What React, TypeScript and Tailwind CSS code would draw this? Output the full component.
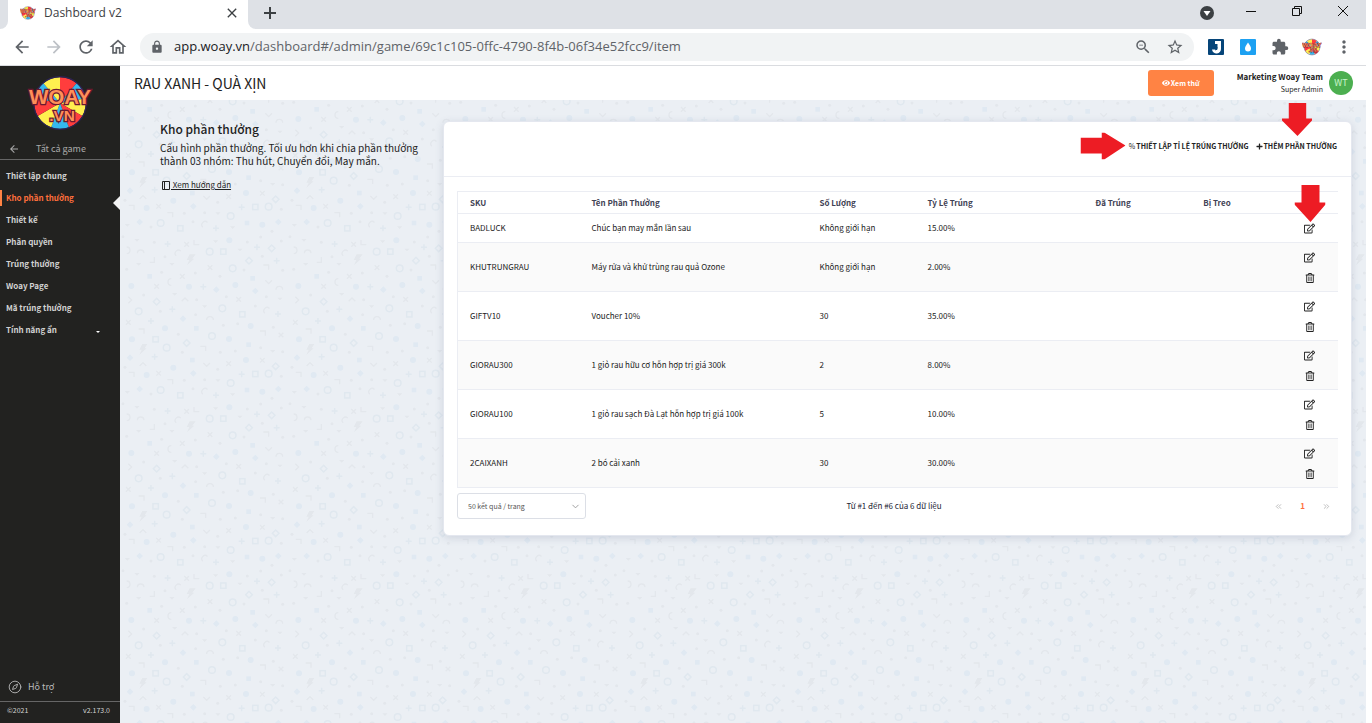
import { useState } from "react";
import { clsx } from "clsx";
import { ChevronDown, ChevronsLeft, ChevronsRight, Compass } from "lucide-react";
import { FaEye, FaPlus, FaRegEdit, FaRegTrashAlt } from "react-icons/fa";
import {
  MdArrowBack,
  MdArrowForward,
  MdClose,
  MdExtension,
  MdLock,
  MdMoreVert,
  MdOutlineHome,
  MdRefresh,
  MdStarBorder,
  MdZoomOut
} from "react-icons/md";

interface Reward {
  sku: string;
  name: string;
  quantity: string;
  rate: string;
  removable: boolean;
}

const REWARDS: Reward[] = [
  { sku: "BADLUCK", name: "Chúc bạn may mắn lần sau", quantity: "Không giới hạn", rate: "15.00%", removable: false },
  { sku: "KHUTRUNGRAU", name: "Máy rửa và khử trùng rau quả Ozone", quantity: "Không giới hạn", rate: "2.00%", removable: true },
  { sku: "GIFTV10", name: "Voucher 10%", quantity: "30", rate: "35.00%", removable: true },
  { sku: "GIORAU300", name: "1 giỏ rau hữu cơ hỗn hợp trị giá 300k", quantity: "2", rate: "8.00%", removable: true },
  { sku: "GIORAU100", name: "1 giỏ rau sạch Đà Lạt hỗn hợp trị giá 100k", quantity: "5", rate: "10.00%", removable: true },
  { sku: "2CAIXANH", name: "2 bó cải xanh", quantity: "30", rate: "30.00%", removable: true }
];

const MENU = [
  "Thiết lập chung",
  "Kho phần thưởng",
  "Thiết kế",
  "Phân quyền",
  "Trúng thưởng",
  "Woay Page",
  "Mã trúng thưởng",
  "Tính năng ẩn"
];

const WHEEL_COLORS = ["#ff3d3d", "#35b8ee", "#fff04f"];

const wedge = (index: number) => {
  const point = (angle: number) => {
    const rad = ((angle - 90) * Math.PI) / 180;
    return `${32 + 25 * Math.cos(rad)} ${27 + 25 * Math.sin(rad)}`;
  };
  return `M32 27L${point(index * 40)}A25 25 0 0 1 ${point(index * 40 + 40)}Z`;
};

function WoayLogo({ className }: { className?: string }) {
  return (
    <svg viewBox="0 0 64 54" className={className} role="img" aria-label="Woay.vn">
      {Array.from({ length: 9 }, (_, i) => (
        <path key={i} d={wedge(i)} fill={WHEEL_COLORS[i % 3]} />
      ))}
      <circle cx="32" cy="27" r="25.5" fill="none" stroke="#2b2354" strokeWidth="1.2" />
      <g
        fill="#ff8f58"
        stroke="#6b1830"
        strokeWidth="2.4"
        paintOrder="stroke"
        textAnchor="middle"
        className="font-['Liberation_Sans',sans-serif] font-bold"
      >
        <text x="32" y="28" fontSize="20">WOAY</text>
        <text x="34" y="44" fontSize="15">.VN</text>
      </g>
    </svg>
  );
}

type Points = [number, number][];

const DISCS: Points = [[187, 41], [88, 88], [106, 222], [295, 225], [468, 227], [152, 345], [87, 384], [297, 385], [396, 352], [138, 447], [421, 470], [341, 492]];
const RINGS: Points = [[92, 15], [206, 488], [383, 36], [29, 122], [98, 172], [67, 292], [317, 301], [36, 375], [401, 410]];
const BLOCKS: Points = [[141, 36], [158, 202], [350, 196], [146, 401], [490, 352], [478, 447]];
const FRAMES: Points = [[442, 52], [70, 122], [127, 310], [368, 385], [166, 489]];
const GEMS: Points = [[235, 33], [320, 33], [49, 236], [166, 240], [450, 323], [291, 440], [481, 487]];
const GEM_FRAMES: Points = [[215, 112], [147, 149], [371, 272], [461, 396], [227, 466]];
const PLUSES: Points = [[48, 52], [171, 109], [404, 99], [230, 149], [10, 227], [234, 309], [354, 330], [418, 295], [365, 437], [125, 490]];
const CROSSES: Points = [[461, 100], [30, 170], [371, 226], [448, 196], [116, 265], [286, 334], [243, 372], [187, 448], [86, 458], [377, 487]];
const TICKS: Points = [[54, 8], [98, 50], [283, 43], [47, 92], [312, 88], [120, 117], [317, 160], [417, 160], [240, 264], [425, 250], [14, 287], [218, 421]];
const DOTS: Points = [
  [14, 5], [216, 61], [182, 78], [244, 90], [270, 77], [142, 93], [354, 48], [454, 7], [480, 32], [364, 94],
  [187, 136], [396, 137], [132, 177], [248, 178], [281, 175], [386, 184], [487, 186], [60, 196], [79, 257],
  [199, 257], [332, 252], [491, 266], [166, 285], [382, 301], [488, 311], [113, 338], [70, 343], [220, 349],
  [436, 370], [182, 410], [61, 424], [106, 420], [248, 422], [448, 424], [276, 469], [53, 475], [244, 496]
];
// x, y, rotation
const ARCS: [number, number, number][] = [[12, 38, -45], [286, 118, 90], [323, 122, 0], [433, 124, -45], [410, 213, -90], [238, 231, 0], [198, 296, -45], [30, 322, 0]];
const CORNERS: [number, number, number][] = [[412, 11, 0], [199, 168, 0], [490, 95, 180], [358, 147, 90], [189, 366, 0], [326, 360, 0], [10, 412, 0], [296, 490, 0]];
const CHEVRONS: [number, number, number][] = [[206, 213, 180], [291, 267, 90], [456, 266, 0], [20, 461, 180], [330, 460, 0]];

function Backdrop() {
  return (
    <svg className="absolute inset-0 h-full w-full" aria-hidden="true">
      <defs>
        <pattern id="confetti" x="80" y="111" width="167" height="167" patternUnits="userSpaceOnUse">
          <g transform="scale(0.3333)" fill="#e0e9f2" stroke="none">
            {DISCS.map(([x, y]) => <circle key={`${x}-${y}`} cx={x} cy={y} r="9" />)}
            {BLOCKS.map(([x, y]) => <rect key={`${x}-${y}`} x={x - 7} y={y - 7} width="14" height="14" />)}
            {GEMS.map(([x, y]) => <path key={`${x}-${y}`} d={`M${x} ${y - 10}l10 10l-10 10l-10 -10z`} />)}
            <g fill="none" stroke="#e0e8ef" strokeWidth="4.5">
              {RINGS.map(([x, y]) => <circle key={`${x}-${y}`} cx={x} cy={y} r="10" />)}
              {FRAMES.map(([x, y]) => <rect key={`${x}-${y}`} x={x - 8} y={y - 8} width="16" height="16" />)}
              {GEM_FRAMES.map(([x, y]) => <path key={`${x}-${y}`} d={`M${x} ${y - 10}l10 10l-10 10l-10 -10z`} />)}
              {PLUSES.map(([x, y]) => <path key={`${x}-${y}`} d={`M${x - 9} ${y}h18M${x} ${y - 9}v18`} />)}
            </g>
            <g fill="none" stroke="#e3e7ec" strokeWidth="4">
              {CROSSES.map(([x, y]) => <path key={`${x}-${y}`} d={`M${x - 7} ${y - 7}l14 14M${x + 7} ${y - 7}l-14 14`} />)}
              {ARCS.map(([x, y, r]) => <path key={`${x}-${y}`} d="M-10 5A10 10 0 0 1 10 5" transform={`translate(${x} ${y}) rotate(${r})`} />)}
              {CORNERS.map(([x, y, r]) => <path key={`${x}-${y}`} d="M-9 -6H7V8" transform={`translate(${x} ${y}) rotate(${r})`} />)}
              {CHEVRONS.map(([x, y, r]) => <path key={`${x}-${y}`} d="M-10 5L0 -5L10 5" transform={`translate(${x} ${y}) rotate(${r})`} />)}
            </g>
            <g fill="#e3e7ec">
              {DOTS.map(([x, y]) => <circle key={`${x}-${y}`} cx={x} cy={y} r="4.5" />)}
              {TICKS.map(([x, y]) => <path key={`${x}-${y}`} d={`M${x - 8} ${y - 4}h16l-8 8z`} />)}
              <path d="M470 130h18l-10 13h6l-22 20l7 -16h-8z" />
              <path d="M328 399h15l-8 13h6l-22 20l7 -16h-7z" />
            </g>
          </g>
        </pattern>
      </defs>
      <rect width="100%" height="100%" fill="url(#confetti)" />
    </svg>
  );
}

function RedArrow({ className }: { className?: string }) {
  return (
    <svg viewBox="0 0 31 36" preserveAspectRatio="none" className={className} fill="#ed1c24" aria-hidden="true">
      <path d="M7 0h18v17h6v2L16 36L0 19v-2h7z" />
    </svg>
  );
}

function BrowserChrome() {
  return (
    <header className="border-b border-[#dadce0] font-['Open_Sans',sans-serif] text-[#5f6368]">
      <div className="flex h-[29px]">
        <div className="w-2 rounded-br-lg bg-[#dee1e6]" />
        <div className="flex w-60 items-center pb-1 pl-3 pr-2">
          <WoayLogo className="h-4 w-4" />
          <span className="ml-2 flex-1 text-xs text-[#3c4043]">Dashboard v2</span>
          <button type="button" aria-label="Close tab">
            <MdClose className="h-4 w-4 text-[#3c4043]" />
          </button>
        </div>
        <div className="flex flex-1 items-center rounded-bl-lg bg-[#dee1e6] pb-1 pl-3 text-[#202124]">
          <button type="button" aria-label="New tab">
            <svg viewBox="0 0 20 20" className="h-5 w-5" stroke="#3c4043" strokeWidth="2">
              <path d="M4 10h12M10 4v12" />
            </svg>
          </button>
          <span className="ml-auto" />
          <button type="button" aria-label="Search tabs" className="mr-8">
            <svg viewBox="0 0 14 14" className="h-[14px] w-[14px]">
              <circle cx="7" cy="7" r="7" fill="#3c4043" />
              <path d="M3.5 5h7L7 10z" fill="#fff" />
            </svg>
          </button>
          <div className="mb-1 flex gap-9 pr-[18px]">
            <button type="button" aria-label="Minimize">
              <svg viewBox="0 0 10 10" className="h-[10px] w-[10px]" stroke="#111" fill="none">
                <path d="M0 5.500h10" />
              </svg>
            </button>
            <button type="button" aria-label="Restore">
              <svg viewBox="0 0 10 10" className="h-[10px] w-[10px]" stroke="#111" fill="none">
                <path d="M.5 2.500h7v7h-7zM2.500 2.500v-2h7v7h-2" />
              </svg>
            </button>
            <button type="button" aria-label="Close">
              <svg viewBox="0 0 10 10" className="h-[10px] w-[10px]" stroke="#111" fill="none">
                <path d="M0 0l10 10M10 0L0 10" />
              </svg>
            </button>
          </div>
        </div>
      </div>
      <div className="flex h-9 items-center gap-3 px-3">
        <button type="button" aria-label="Back"><MdArrowBack className="h-5 w-5" /></button>
        <button type="button" aria-label="Forward"><MdArrowForward className="h-5 w-5 text-[#bdc1c6]" /></button>
        <button type="button" aria-label="Reload"><MdRefresh className="h-5 w-5" /></button>
        <button type="button" aria-label="Home"><MdOutlineHome className="h-5 w-5" /></button>
        <div className="flex h-7 flex-1 items-center gap-[10px] rounded-full bg-[#f1f3f4] px-[10px]">
          <MdLock className="h-[14px] w-[14px]" />
          <p className="flex-1 text-[13px] text-[#5f6368]">
            <span className="text-[#202124]">app.woay.vn</span>/dashboard#/admin/game/69c1c105-0ffc-4790-8f4b-06f34e52fcc9/item
          </p>
          <button type="button" aria-label="Zoom"><MdZoomOut className="h-[18px] w-[18px]" /></button>
          <button type="button" aria-label="Bookmark" className="ml-1"><MdStarBorder className="h-[18px] w-[18px]" /></button>
        </div>
        <div className="flex items-center gap-3">
          <svg viewBox="-2 0 20 16" className="h-4 w-5">
            <rect width="16" height="16" rx="1" fill="#064579" />
            <path d="M7 2h6v7.500a4.500 4.500 0 0 1-9 1h3.200c.8 1 2.300.6 2.300-1V5H7z" fill="#fff" />
            <path d="M8.800 6L6 9h2l-1 3l3-3.500H8.500z" fill="#064579" />
          </svg>
          <svg viewBox="-2 0 20 16" className="h-4 w-5">
            <rect width="16" height="16" rx="1" fill="#1da1f2" />
            <path d="M8 3.500c2 3 3 4.300 3 6a3 3 0 0 1-6 0c0-1.700 1-3 3-6z" fill="#fff" />
          </svg>
          <MdExtension className="h-[18px] w-5" />
          <WoayLogo className="h-5 w-5" />
          <button type="button" aria-label="Menu"><MdMoreVert className="h-5 w-5" /></button>
        </div>
      </div>
    </header>
  );
}

function Sidebar() {
  return (
    <aside className="relative flex w-[120px] shrink-0 flex-col bg-[#222220] text-[#d2d2d2]">
      <WoayLogo className="mx-auto mt-[9px] h-[56px] w-[66px]" />
      <a href="#games" className="mt-2 flex h-[21px] items-center gap-4 border-b border-[#666] pl-2 text-[9px] text-[#aaa]">
        <MdArrowBack className="h-3 w-3" />
        Tất cả game
      </a>
      <nav className="mt-[5px] flex flex-col text-[8px] font-bold">
        {MENU.map((item, index) => (
          <a key={item} href={`#menu-${index}`} className={clsx("flex h-[22px] items-center", index === 1 && "text-[#ff6f3c]")}>
            <span className={clsx("mr-1 h-4 w-[2px]", index === 1 && "bg-[#ff8344]")} />
            {item}
            {index === MENU.length - 1 ? (
              <span className="ml-auto mr-5 mt-1 border-x-2 border-t-2 border-x-transparent border-t-white" />
            ) : null}
          </a>
        ))}
      </nav>
      <span className="absolute right-0 top-[130px] border-y-[7px] border-r-[7px] border-y-transparent border-r-[#f4f4f4]" />
      <a href="#support" className="mt-auto flex items-center gap-[6px] border-b border-[#666] px-2 pb-[7px] text-[9px] text-[#bbb]">
        <Compass className="h-[14px] w-[14px]" strokeWidth={1.5} />
        Hỗ trợ
      </a>
      <div className="flex h-[21px] items-center justify-between pb-1 pl-[7px] pr-[10px] text-[7px]">
        <span>©2021</span>
        <span>v2.173.0</span>
      </div>
    </aside>
  );
}

function RewardTable() {
  return (
    <table className="w-full table-fixed border-collapse border-l border-t border-[#ebedf3] text-left text-[8px] leading-3 text-[#222]">
      <thead>
        <tr className="h-[22px] text-[#3f4254]">
          <th className="w-[122px] pl-3 font-semibold">SKU</th>
          <th className="w-[228px] pl-3 font-semibold">Tên Phần Thưởng</th>
          <th className="w-[108px] pl-3 font-semibold">Số Lượng</th>
          <th className="pl-3 font-semibold">Tỷ Lệ Trúng</th>
          <th className="w-[104px] text-center font-semibold">Đã Trúng</th>
          <th className="w-[104px] text-center font-semibold">Bị Treo</th>
          <th className="w-[69px]" aria-label="Thao tác" />
        </tr>
      </thead>
      <tbody>
        {REWARDS.map((reward, index) => (
          <tr key={reward.sku} className={clsx("border-y border-[#ebedf3]", index % 2 === 1 && "bg-[#fafafa]", reward.removable ? "h-[49px]" : "h-[29px]")}>
            <td className="pl-3">{reward.sku}</td>
            <td className="pl-3">{reward.name}</td>
            <td className="pl-3">{reward.quantity}</td>
            <td className="pl-3">{reward.rate}</td>
            <td />
            <td />
            <td className="pl-3">
              <div className="flex flex-col items-center gap-[10px]">
                <button type="button" aria-label={`Sửa ${reward.sku}`} className="relative">
                  <FaRegEdit className="h-[11px] w-[11px]" />
                  {index === 0 ? <RedArrow className="absolute bottom-full left-1/2 mb-[1px] h-[37px] w-[31px] -translate-x-1/2" /> : null}
                </button>
                {reward.removable ? (
                  <button type="button" aria-label={`Xóa ${reward.sku}`}>
                    <FaRegTrashAlt className="h-[10px] w-[10px]" />
                  </button>
                ) : null}
              </div>
            </td>
          </tr>
        ))}
      </tbody>
    </table>
  );
}

function RewardCard() {
  const [pageSize, setPageSize] = useState("50");

  return (
    <section className="rounded-md border border-[#e4e7ef] bg-white shadow-[0_2px_8px_rgba(80,90,120,0.18)]">
      <div className="flex h-[55px] items-center justify-end gap-2 border-b border-[#ebedf3] px-[14px] pb-[6px] text-[7px] font-semibold leading-3 text-[#222]">
        <button type="button" className="relative flex items-center gap-[1px]">
          <RedArrow className="absolute -left-[26px] top-1/2 h-[45px] w-[27px] -translate-x-1/2 -translate-y-1/2 -rotate-90" />
          <span className="font-normal">%</span>
          THIẾT LẬP TỈ LỆ TRÚNG THƯỞNG
        </button>
        <button type="button" className="relative flex items-center">
          <RedArrow className="absolute bottom-full left-1/2 mb-1 h-[33px] w-[30px] -translate-x-1/2" />
          <FaPlus className="h-[7px] w-[7px]" />
          THÊM PHẦN THƯỞNG
        </button>
      </div>
      <div className="px-[13px] pb-4 pt-[14px]">
        <RewardTable />
        <div className="mt-[5px] flex items-center justify-between text-[8px] text-[#223]">
          <div className="relative flex-1">
            <select
              value={pageSize}
              onChange={(event) => setPageSize(event.target.value)}
              aria-label="Số kết quả mỗi trang"
              className="block h-[26px] w-[129px] appearance-none rounded-[3px] border border-[#dcdfe6] bg-white pl-[10px] text-[7px] text-[#555]"
            >
              <option value="50">50 kết quả / trang</option>
              <option value="100">100 kết quả / trang</option>
            </select>
            <ChevronDown className="pointer-events-none absolute left-[113px] top-2 h-[11px] w-[11px] text-[#999]" />
          </div>
          <p>Từ #1 đến #6 của 6 dữ liệu</p>
          <nav className="flex flex-1 items-center justify-end gap-[17px] pr-[7px] text-[#aaa]">
            <button type="button" aria-label="Trang trước"><ChevronsLeft className="h-[9px] w-[9px]" /></button>
            <button type="button" className="font-semibold text-[#ff6f3c]">1</button>
            <button type="button" aria-label="Trang sau"><ChevronsRight className="h-[9px] w-[9px]" /></button>
          </nav>
        </div>
      </div>
    </section>
  );
}

export default function App() {
  return (
    <div className="flex min-h-screen flex-col bg-white pr-[6px]">
      <BrowserChrome />
      <div className="flex flex-1 font-['Noto_Sans_CJK_JP',sans-serif]">
        <Sidebar />
        <div className="flex min-w-0 flex-1 flex-col">
          <header className="flex h-[34px] items-center pl-[14px] pr-[13px] text-[#222]">
            <h1 className="flex-1 text-sm">RAU XANH - QUÀ XỊN</h1>
            <button type="button" className="flex h-[26px] w-[66px] items-center justify-center gap-[1px] rounded-[3px] bg-[#ff8344] text-[7px] font-bold text-white">
              <FaEye className="h-2 w-2" />
              Xem thử
            </button>
            <div className="ml-[23px] text-right text-[8px] leading-[13px]">
              <p className="font-semibold">Marketing Woay Team</p>
              <p className="text-[7px]">Super Admin</p>
            </div>
            <span className="ml-[6px] flex h-6 w-6 items-center justify-center rounded-full bg-[#4caf50] text-[9px] text-[#c8f5ca]">WT</span>
          </header>
          <main className="relative flex-1 bg-[#ebeff4]">
            <Backdrop />
            <div className="relative flex pl-10 pr-[14px] pt-[21px]">
              <div className="w-[283px] shrink-0 text-[#222]">
                <h2 className="text-xs font-medium leading-4">Kho phần thưởng</h2>
                <p className="mt-1 max-w-[260px] text-[10px] leading-[13px]">
                  Cấu hình phần thưởng. Tối ưu hơn khi chia phần thưởng thành 03 nhóm: Thu hút, Chuyển đổi, May mắn.
                </p>
                <a href="#guide" className="mt-3 flex items-center gap-[1px] pl-[2px] text-[8px] leading-3">
                  <svg viewBox="0 0 8 9" className="h-[9px] w-2" fill="none" stroke="#222">
                    <path d="M.5.5h7v8h-7zM2.500.5v8" />
                  </svg>
                  <span className="whitespace-pre underline"> Xem hướng dẫn</span>
                </a>
              </div>
              <div className="min-w-0 flex-1">
                <RewardCard />
              </div>
            </div>
          </main>
        </div>
      </div>
    </div>
  );
}
